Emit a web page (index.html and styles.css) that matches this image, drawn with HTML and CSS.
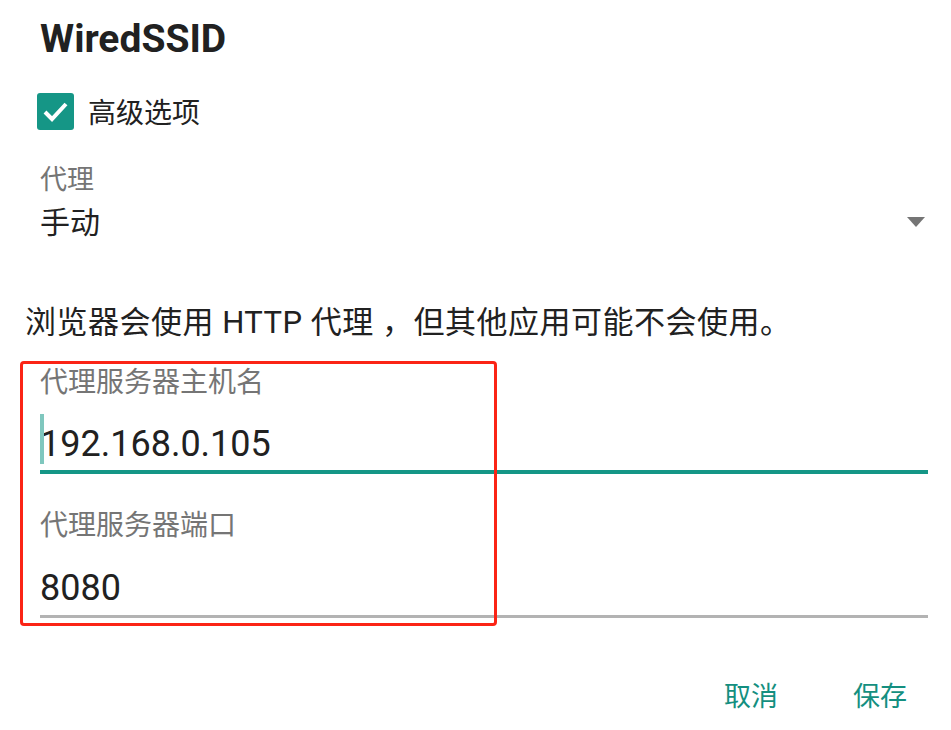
FILE: index.html
```html
<!DOCTYPE html>
<html lang="zh-CN">
<head>
<meta charset="utf-8">
<title>WiredSSID</title>
<link rel="stylesheet" href="styles.css">
</head>
<body>
<div class="dialog">
  <h1 class="title">WiredSSID</h1>
  <label class="check-row">
    <span class="checkbox">
      <svg viewBox="0 0 37 37" width="37" height="37"><path d="M8 19 L15 26 L29 11" fill="none" stroke="#fff" stroke-width="4"/></svg>
    </span>
    <span class="check-text">高级选项</span>
  </label>
  <div class="field-label">代理</div>
  <div class="spinner">
    <span class="spinner-value">手动</span>
    <span class="spinner-arrow"></span>
  </div>
  <p class="desc">浏览器会使用 HTTP 代理 ，但其他应用可能不会使用。</p>
  <div class="input-group">
    <div class="input-label">代理服务器主机名</div>
    <div class="input focused"><span class="cursor"></span>192.168.0.105</div>
    <div class="input-label second">代理服务器端口</div>
    <div class="input">8080</div>
    <div class="highlight"></div>
  </div>
  <div class="actions">
    <button class="btn">取消</button>
    <button class="btn">保存</button>
  </div>
</div>
</body>
</html>
```
FILE: styles.css
```css
html, body {
  margin: 0;
  padding: 0;
  background: #fff;
}
body {
  font-family: Roboto, "Noto Sans CJK SC", sans-serif;
  color: #212121;
}
.dialog {
  width: 951px;
  height: 730px;
  box-sizing: border-box;
  padding: 18px 23px 0 40px;
}
.title {
  margin: 0;
  font-size: 39px;
  font-weight: 700;
  line-height: 42px;
  color: #212121;
}
.check-row {
  display: flex;
  align-items: center;
  margin: 33px 0 0 -3px;
  height: 37px;
}
.checkbox {
  width: 37px;
  height: 37px;
  border-radius: 3px;
  background: #159686;
  display: block;
}
.checkbox svg { display: block; }
.check-text {
  margin-left: 14px;
  font-size: 28px;
  line-height: 37px;
  margin-top: 3px;
  color: #212121;
}
.field-label {
  margin-top: 34px;
  font-size: 27px;
  line-height: 32px;
  color: #757575;
}
.spinner {
  display: flex;
  align-items: center;
  justify-content: space-between;
  margin-top: 9px;
  height: 36px;
}
.spinner-value {
  font-size: 30px;
  line-height: 36px;
  color: #212121;
}
.spinner-arrow {
  width: 0;
  height: 0;
  border-left: 9px solid transparent;
  border-right: 9px solid transparent;
  border-top: 10px solid #757575;
  margin-right: 3px;
  margin-top: -2px;
}
.desc {
  margin: 64px 0 0 -15px;
  font-size: 31px;
  letter-spacing: 0.5px;
  line-height: 36px;
  color: #212121;
}
.input-group {
  position: relative;
  margin-top: 26px;
}
.input-label {
  font-size: 28px;
  line-height: 32px;
  color: #757575;
}
.input-label.second { margin-top: 36px; }
.input {
  position: relative;
  font-size: 36px;
  line-height: 42px;
  margin-top: 25px;
  padding-bottom: 6px;
  border-bottom: 3px solid #b3b3b3;
  color: #212121;
}
.input.focused {
  margin-top: 24px;
  border-bottom: 4px solid #159686;
  padding-bottom: 5px;
}
.cursor {
  position: absolute;
  left: 0;
  top: -9px;
  width: 4px;
  height: 50px;
  background: #7fc7be;
}
.highlight {
  position: absolute;
  left: -20px;
  top: -6px;
  width: 471px;
  height: 259px;
  border: 3px solid #fb2416;
  border-radius: 4px;
  pointer-events: none;
}
.actions {
  display: flex;
  justify-content: flex-end;
  gap: 75px;
  margin-top: 62px;
  padding-right: 21px;
}
.btn {
  border: 0;
  background: none;
  padding: 0;
  font-family: Roboto, "Noto Sans CJK SC", sans-serif;
  font-size: 27px;
  line-height: 34px;
  color: #148f80;
}
```
